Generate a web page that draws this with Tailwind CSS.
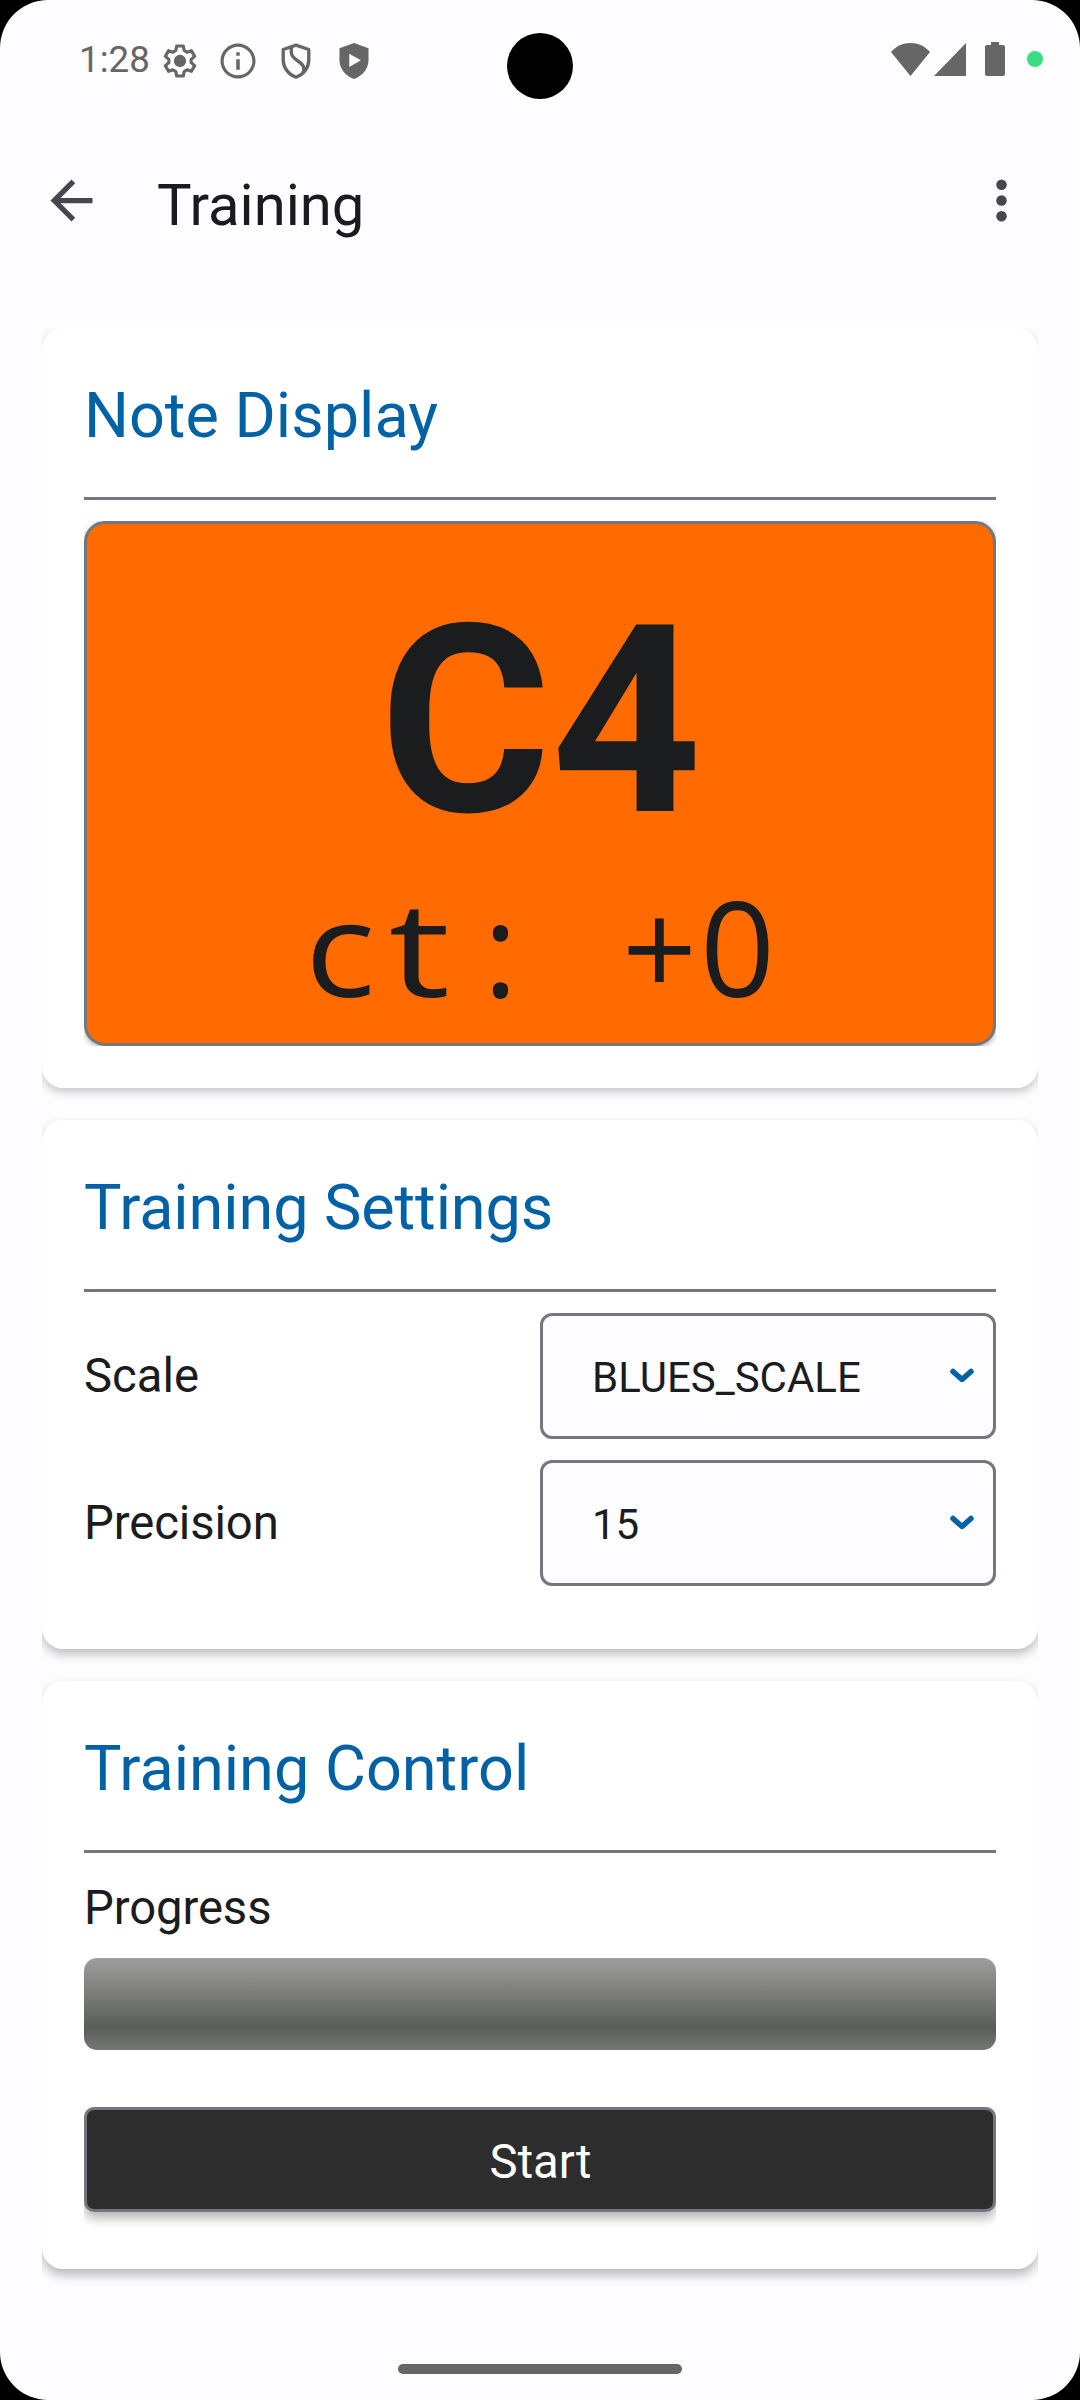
<!DOCTYPE html>
<html lang="en">
<head>
<meta charset="utf-8">
<title>Training</title>
<script src="https://cdn.jsdelivr.net/npm/@tailwindcss/browser@4"></script>
</head>
<body class="bg-black">
<div class="relative flex h-[2400px] w-[1080px] flex-col overflow-hidden rounded-[48px] bg-[#fdfcff] font-[Roboto,sans-serif] text-[#1a1c1e]">
  <!-- Status bar -->
  <div class="flex h-[118px] items-center justify-between pl-[79px] pr-[37px] text-[#666]">
    <div class="flex items-center pt-[3px]">
      <span class="w-[79px] text-[36.75px] leading-none">1:28</span>
      <svg class="ml-[2px] size-[40px]" viewBox="0 0 24 24" fill="none" stroke="currentColor" stroke-width="1.9"><path stroke-linejoin="round" d="M10 3h4l.5 2.7 1.7 1 2.6-.9 2 3.4-2.1 1.8v2l2.1 1.8-2 3.4-2.6-.9-1.7 1L14 21h-4l-.5-2.7-1.7-1-2.6.9-2-3.4L5.300 13v-2L3.200 9.200l2-3.400 2.600.9 1.700-1z"/><circle cx="12" cy="12" r="3.700" fill="currentColor" stroke="none"/></svg>
      <svg class="ml-[17px] size-[42px]" viewBox="0 0 24 24" fill="currentColor"><path d="M11 7h2v2h-2zm0 4h2v6h-2zm1-9C6.480 2 2 6.480 2 12s4.480 10 10 10 10-4.480 10-10S17.520 2 12 2zm0 18.200c-4.500 0-8.200-3.700-8.200-8.200S7.500 3.800 12 3.800s8.200 3.700 8.200 8.200-3.700 8.200-8.200 8.200z"/></svg>
      <svg class="ml-[16px] size-[42px]" viewBox="0 0 24 24" fill="none" stroke="currentColor" stroke-width="1.9"><path stroke-linejoin="round" d="M12 2.900l7.300 2.500v6c0 4.400-3 8.400-7.300 9.900-4.300-1.500-7.300-5.500-7.300-9.900v-6z"/><path d="M9.300 3.800v3.400c0 4.700 7.200 4.600 7.200 9.300 0 .8-.2 1.500-.6 2.200"/></svg>
      <svg class="ml-[16px] size-[42px]" viewBox="0 0 24 24" fill="currentColor"><path fill-rule="evenodd" d="M12 1.700l8.300 3v6.700c0 4.900-3.500 9.300-8.300 10.900-4.800-1.600-8.300-6-8.300-10.900V4.700zM9.300 7.800v7.600l6.600-3.800z"/></svg>
    </div>
    <div class="flex items-center">
      <svg class="h-[33px] w-[39px]" viewBox="0 0 39 33" fill="currentColor"><path d="M19.500 33L0 9C5 3.200 12 0 19.500 0S34 3.200 39 9z"/></svg>
      <svg class="ml-[4px] h-[33px] w-[32px]" viewBox="0 0 32 33" fill="currentColor"><path d="M32 0v33H0z"/></svg>
      <svg class="ml-[19px] h-[34px] w-[20px]" viewBox="0 0 20 34" fill="currentColor"><path d="M6 0h8v3h4a2 2 0 0 1 2 2v27a2 2 0 0 1-2 2H2a2 2 0 0 1-2-2V5a2 2 0 0 1 2-2h4z"/></svg>
      <span class="ml-[22px] size-[16px] rounded-full bg-[#3ddc84]"></span>
    </div>
  </div>
  <!-- Camera cutout -->
  <div class="absolute left-[507px] top-[33px] size-[66px] rounded-full bg-black"></div>

  <!-- App bar -->
  <header class="flex h-[168px] items-center pl-[39.500px] pr-[47px] text-[#46464f]">
    <svg class="mb-[3px] size-[63px]" viewBox="0 0 24 24" fill="currentColor"><path d="M20 11H7.830l5.590-5.590L12 4l-8 8 8 8 1.410-1.410L7.830 13H20v-2z"/></svg>
    <h1 class="ml-[54.500px] flex-1 pt-[6px] text-[58px] leading-[68px] text-[#1b1b1f]">Training</h1>
    <svg class="mb-[3px] size-[63px]" viewBox="0 0 24 24" fill="currentColor"><circle cx="12" cy="6" r="2"/><circle cx="12" cy="12" r="2"/><circle cx="12" cy="18" r="2"/></svg>
  </header>

  <main class="mt-[42px] flex flex-col px-[42px]">
    <!-- Note display -->
    <section class="h-[760px] rounded-[21px] bg-white px-[42px] pt-[42px] shadow-[0_4px_10px_rgba(0,0,0,0.22)] [clip-path:inset(0_0_-24px_0)]">
      <h2 class="text-[63px] leading-[91px] text-[#0061a4]">Note Display</h2>
      <div class="mt-[36px] h-[3px] bg-[#73777f]"></div>
      <div class="mt-[21px] h-[525px] rounded-[21px] border-[3px] border-[#73777f] bg-[#ff6b00] pt-[43px] text-center shadow-[0_2px_6px_rgba(0,0,0,0.3)] [clip-path:inset(0)]">
        <div class="pl-[1px] text-[262.5px] font-bold leading-[308px]">C4</div>
        <div class="flex justify-center pt-[1px] font-['Open_Sans',sans-serif] text-[131.25px] leading-[140px]"><span class="w-[79px] pr-[4px] scale-x-112">c</span><span class="w-[79px] pr-[3px] scale-x-132">t</span><span class="w-[79px]">:</span><span class="w-[79px]">&nbsp;</span><span class="w-[79px] pl-[2px]">+</span><span class="w-[79px]">0</span></div>
      </div>
    </section>

    <!-- Training settings -->
    <section class="mt-[32px] h-[529px] rounded-[21px] bg-white px-[42px] pt-[42px] shadow-[0_5px_11px_rgba(0,0,0,0.26)] [clip-path:inset(-2px_0_-24px_0)]">
      <h2 class="text-[63px] leading-[91px] tracking-[-0.1px] text-[#0061a4]">Training Settings</h2>
      <div class="mt-[36px] h-[3px] bg-[#73777f]"></div>
      <div class="mt-[21px] grid grid-cols-2 items-center gap-y-[21px] text-[47.25px]">
        <span>Scale</span>
        <div class="flex h-[126px] items-center justify-between rounded-[12px] border-[3px] border-[#73777f] bg-[#fdfcff] pl-[49px] pr-[17px] text-[42px]">
          <span class="pt-[3px]">BLUES_SCALE</span>
          <svg class="h-[16px] w-[28px]" viewBox="0 0 28 16" fill="none" stroke="#0061a4" stroke-width="5.500" stroke-linecap="round" stroke-linejoin="round"><path d="M5 3.500l9 8L23 3.500"/></svg>
        </div>
        <span class="tracking-[-0.1px]">Precision</span>
        <div class="flex h-[126px] items-center justify-between rounded-[12px] border-[3px] border-[#73777f] bg-[#fdfcff] pl-[49px] pr-[17px] text-[42px]">
          <span class="pt-[3px]">15</span>
          <svg class="h-[16px] w-[28px]" viewBox="0 0 28 16" fill="none" stroke="#0061a4" stroke-width="5.500" stroke-linecap="round" stroke-linejoin="round"><path d="M5 3.500l9 8L23 3.500"/></svg>
        </div>
      </div>
    </section>

    <!-- Training control -->
    <section class="mt-[32px] h-[588px] rounded-[21px] bg-white px-[42px] pt-[42px] shadow-[0_6px_12px_rgba(0,0,0,0.28)] [clip-path:inset(-2px_0_-24px_0)]">
      <h2 class="text-[63px] leading-[91px] text-[#0061a4]">Training Control</h2>
      <div class="mt-[36px] h-[3px] bg-[#73777f]"></div>
      <div class="mt-[27px] text-[47.25px] leading-[56px] tracking-[-0.1px]">Progress</div>
      <div class="mt-[22px] h-[92px] rounded-[13px] bg-[linear-gradient(to_bottom,#9e9e9e,#5a5d58_75%,#747674)]"></div>
      <button class="mt-[57px] block h-[105px] w-full rounded-[10px] border-[3px] border-[#73777f] bg-[#2d2d2d] pl-[1px] pt-[5px] text-center text-[47.25px] leading-[94px] text-white shadow-[0_6px_11px_rgba(0,0,0,0.3)] [clip-path:inset(0_0_-24px_0)]">Start</button>
    </section>
  </main>

  <!-- Gesture bar -->
  <div class="absolute bottom-[26px] left-[398px] h-[10px] w-[284px] rounded-full bg-[#666]"></div>
</div>
</body>
</html>
